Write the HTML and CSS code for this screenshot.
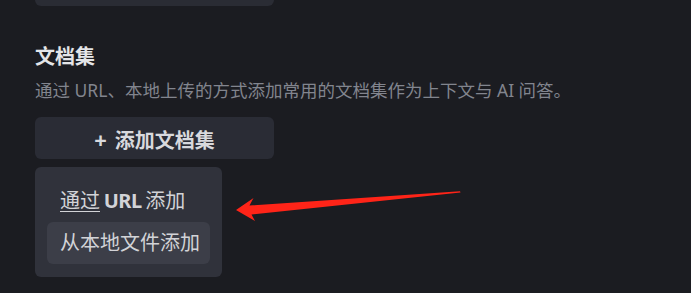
FILE: index.html
```html
<!DOCTYPE html>
<html lang="zh-CN">
<head>
<meta charset="utf-8">
<link rel="stylesheet" href="styles.css">
</head>
<body>
<div class="page">
  <div class="top-box"></div>
  <h2 class="title">文档集</h2>
  <p class="desc">通过 URL、本地上传的方式添加常用的文档集作为上下文与 AI 问答。</p>
  <button class="add-btn"><span class="plus">+</span>添加文档集</button>
  <div class="menu">
    <div class="menu-item tight"><span class="ul">通过</span> <span class="latin">URL</span> 添加</div>
    <div class="menu-item active">从本地文件添加</div>
  </div>
  <svg class="arrow" width="691" height="293" viewBox="0 0 691 293">
    <polygon points="236,210 253.5,198 249.5,205.5 460,191.2 460.5,192.6 251.5,214.5 255,221" fill="#ff2418"/>
  </svg>
</div>
</body>
</html>
```
FILE: styles.css
```css
html, body {
  margin: 0;
  padding: 0;
  background: #1b1c21;
}
body {
  width: 691px;
  height: 293px;
  overflow: hidden;
  font-family: "Noto Sans", "Noto Sans CJK SC", sans-serif;
}
.page {
  position: relative;
  padding-left: 35px;
  height: 293px;
}
.top-box {
  width: 239px;
  height: 6px;
  background: #2a2c34;
  border-radius: 0 0 6px 6px;
}
.title {
  margin: 37px 0 0;
  font-size: 20px;
  line-height: 28px;
  font-weight: 700;
  color: #e4e5e8;
}
.desc {
  margin: 6px 0 0;
  font-size: 17.5px;
  line-height: 26px;
  color: #82858e;
  white-space: nowrap;
}
.add-btn {
  display: flex;
  align-items: center;
  justify-content: center;
  margin-top: 14px;
  width: 239px;
  height: 42px;
  padding: 2px 0 0;
  border: none;
  border-radius: 6px;
  background: #2a2c35;
  color: #d8d9dd;
  font-family: inherit;
  font-size: 20px;
  font-weight: 700;
}
.plus {
  margin-right: 8px;
  font-size: 22px;
  font-weight: 700;
}
.menu {
  margin-top: 8px;
  width: 187px;
  box-sizing: border-box;
  padding: 13px 12px;
  background: #30323b;
  border-radius: 6px;
}
.menu-item {
  height: 42px;
  line-height: 42px;
  padding-left: 13px;
  font-size: 20px;
  color: #d2d3d7;
  border-radius: 6px;
  white-space: nowrap;
}
.menu-item.tight {
  word-spacing: -1.5px;
}
.menu-item.active {
  background: #3c3e48;
}
.ul {
  text-decoration: underline;
  text-decoration-thickness: 1px;
  text-underline-offset: 3px;
}
.latin {
  font-weight: 700;
  letter-spacing: -0.5px;
}
.arrow {
  position: absolute;
  left: 0;
  top: 0;
}
```
